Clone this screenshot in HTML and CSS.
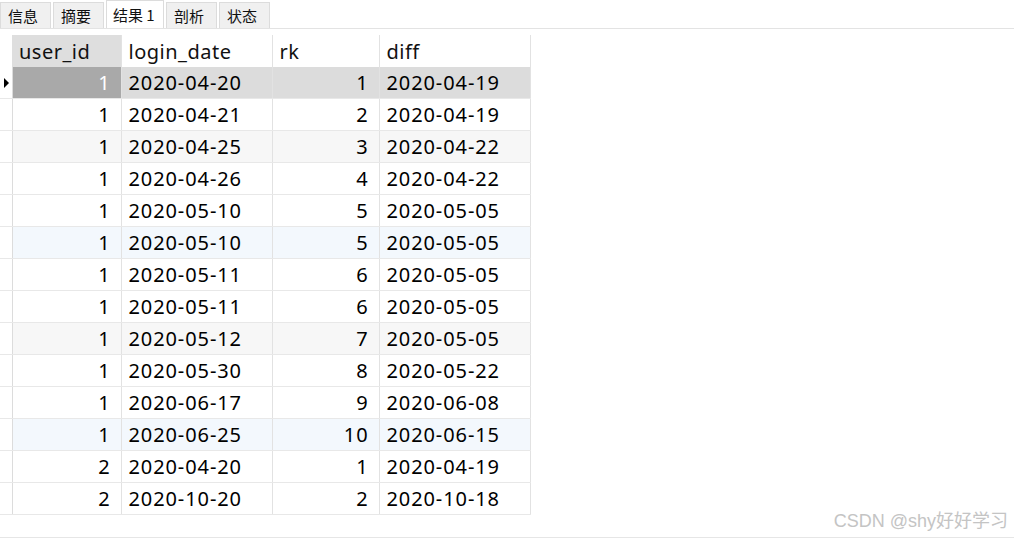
FILE: index.html
```html
<!DOCTYPE html>
<html>
<head>
<meta charset="utf-8">
<link rel="stylesheet" href="styles.css">
</head>
<body>
<div class="tabs">
  <div class="tab">信息</div>
  <div class="tab">摘要</div>
  <div class="tab active">结果 1</div>
  <div class="tab">剖析</div>
  <div class="tab">状态</div>
</div>
<div class="grid-area">
<table class="grid">
  <thead>
    <tr><th class="ind"></th><th class="c1 hl">user_id</th><th class="c2">login_date</th><th class="c3">rk</th><th class="c4">diff</th></tr>
  </thead>
  <tbody>
    <tr class="sel"><td class="ind"><span class="arrow"></span></td><td class="num cur">1</td><td>2020-04-20</td><td class="num">1</td><td>2020-04-19</td></tr>
    <tr><td class="ind"></td><td class="num">1</td><td>2020-04-21</td><td class="num">2</td><td>2020-04-19</td></tr>
    <tr class="g"><td class="ind"></td><td class="num">1</td><td>2020-04-25</td><td class="num">3</td><td>2020-04-22</td></tr>
    <tr><td class="ind"></td><td class="num">1</td><td>2020-04-26</td><td class="num">4</td><td>2020-04-22</td></tr>
    <tr><td class="ind"></td><td class="num">1</td><td>2020-05-10</td><td class="num">5</td><td>2020-05-05</td></tr>
    <tr class="b"><td class="ind"></td><td class="num">1</td><td>2020-05-10</td><td class="num">5</td><td>2020-05-05</td></tr>
    <tr><td class="ind"></td><td class="num">1</td><td>2020-05-11</td><td class="num">6</td><td>2020-05-05</td></tr>
    <tr><td class="ind"></td><td class="num">1</td><td>2020-05-11</td><td class="num">6</td><td>2020-05-05</td></tr>
    <tr class="g"><td class="ind"></td><td class="num">1</td><td>2020-05-12</td><td class="num">7</td><td>2020-05-05</td></tr>
    <tr><td class="ind"></td><td class="num">1</td><td>2020-05-30</td><td class="num">8</td><td>2020-05-22</td></tr>
    <tr><td class="ind"></td><td class="num">1</td><td>2020-06-17</td><td class="num">9</td><td>2020-06-08</td></tr>
    <tr class="b"><td class="ind"></td><td class="num">1</td><td>2020-06-25</td><td class="num">10</td><td>2020-06-15</td></tr>
    <tr><td class="ind"></td><td class="num">2</td><td>2020-04-20</td><td class="num">1</td><td>2020-04-19</td></tr>
    <tr><td class="ind"></td><td class="num">2</td><td>2020-10-20</td><td class="num">2</td><td>2020-10-18</td></tr>
  </tbody>
</table>
<div class="watermark">CSDN @shy好好学习</div>
</div>
</body>
</html>
```

FILE: styles.css
```css
html, body {
  margin: 0;
  padding: 0;
  background: #ffffff;
  width: 1014px;
  height: 538px;
  overflow: hidden;
  font-family: "Noto Sans", "Noto Sans CJK SC", sans-serif;
}

.tabs {
  display: flex;
  align-items: flex-end;
  height: 28px;
  border-bottom: 1px solid #e3e3e3;
  gap: 2px;
}

.tab {
  box-sizing: border-box;
  height: 26px;
  padding: 0 7px;
  width: 51px;
  background: #f0f0f0;
  border: 1px solid #dcdcdc;
  border-bottom: none;
  font-size: 15px;
  line-height: 26px;
  color: #111;
  font-family: "Noto Sans CJK SC", sans-serif;
}

.tab.active {
  background: #ffffff;
  height: 28px;
  width: 58px;
  line-height: 28px;
  padding: 0 6px;
}

.grid-area {
  position: relative;
  height: 509px;
  border-bottom: 1px solid #e6e6e6;
  box-sizing: border-box;
  padding-top: 6px;
}

.grid {
  border-collapse: collapse;
  table-layout: fixed;
  font-size: 20px;
  letter-spacing: 0.9px;
  color: #000;
}

.grid th, .grid td {
  height: 31px;
  padding: 0 7px;
  white-space: nowrap;
  border-right: 1px solid #e2e2e2;
  border-bottom: 1px solid #e8e8e8;
  line-height: 31px;
}

.grid th {
  font-weight: normal;
  text-align: left;
  border-bottom: none;
  height: 32px;
  color: #111;
  letter-spacing: 0.5px;
}

.grid .ind {
  width: 12px;
  padding: 0;
  box-sizing: border-box;
  border-right: 1px solid #dcdcdc;
  position: relative;
}

.grid th.ind { border-right: none; }

.c1 { width: 109px; box-sizing: border-box; }
.c2 { width: 151px; box-sizing: border-box; }
.c3 { width: 107px; box-sizing: border-box; }
.c4 { width: 151px; box-sizing: border-box; }

.grid th.hl { background: #dedede; }

.grid td.num { text-align: right; padding-right: 10px; }

.grid tr.g td { background: #f7f7f7; }
.grid tr.b td { background: #f3f8fd; }
.grid tr.g td.ind, .grid tr.b td.ind { background: #ffffff; }

.grid tr.sel td { background: #dcdcdc; }
.grid tr.sel td.ind { background: #ffffff; }
.grid tr.sel td.cur { background: #a9a9a9; color: #ffffff; }

.arrow {
  position: absolute;
  left: 4px;
  top: 11px;
  width: 0;
  height: 0;
  border-top: 5px solid transparent;
  border-bottom: 5px solid transparent;
  border-left: 5px solid #000;
}

.watermark {
  position: absolute;
  right: 6px;
  bottom: 5px;
  font-family: "Liberation Sans", "Noto Sans CJK SC", sans-serif;
  font-size: 18px;
  color: #c4c4c4;
}
```
